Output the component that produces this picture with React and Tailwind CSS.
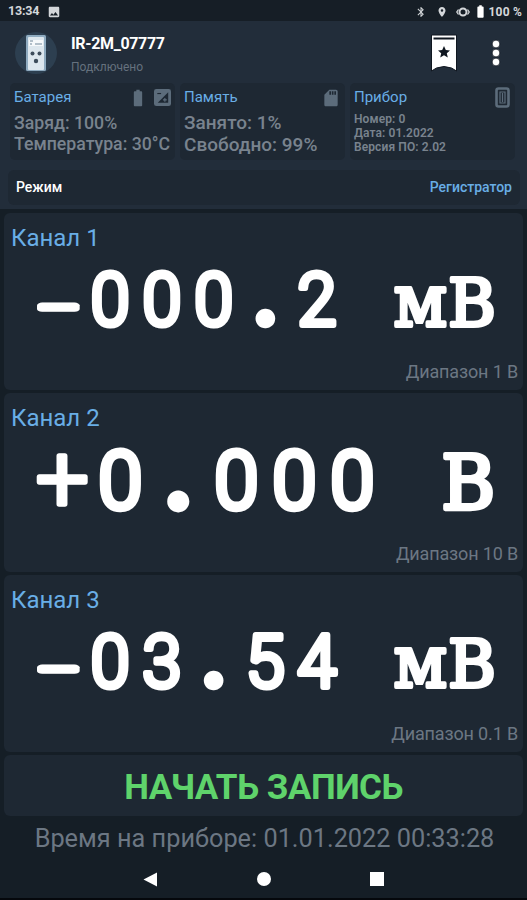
import { MdBluetooth, MdLocationOn, MdImage, MdBatteryFull, MdSdCard } from "react-icons/md";

// look of each symbol on the indicator, other symbols use the digit style
const digit = { font: "font-['Roboto'] font-light", size: 71.5, stroke: 6, sx: 0.98, dy: -0.5 };
const glyphs = {
  "-": { font: "font-['Roboto'] font-light", size: 72, stroke: 5.6, sx: 1.9, dy: 4.5 },
  "+": { font: "font-['Roboto'] font-light", size: 83, stroke: 4.8, sx: 1, dy: 2 },
  ".": { font: "font-['Lato'] font-bold", size: 60, stroke: 10.5, sx: 1, dy: -2.5 },
  "м": { font: "font-['DejaVu_Serif']", size: 72, stroke: 3.8, sx: 0.96, dy: 0.3 },
  "В": { font: "font-['DejaVu_Serif']", size: 66, stroke: 3.8, sx: 0.99, dy: 0.3 },
};

const channels = [
  { name: "Канал 1", value: "-000.2 мВ", range: "Диапазон 1 В", height: "h-[177px]", start: 54.5, pitch: 51.7, scale: 1, baseline: 65 },
  { name: "Канал 2", value: "+0.000 В", range: "Диапазон 10 В", height: "h-[179px]", start: 58.3, pitch: 58, scale: 1.125, baseline: 68.5 },
  { name: "Канал 3", value: "-03.54 мВ", range: "Диапазон 0.1 В", height: "h-[177px]", start: 54.5, pitch: 51.7, scale: 1, baseline: 64.5 },
];

function StatusBar() {
  return (
    <div className="flex h-[21px] shrink-0 items-center bg-[#161e26] pl-2 pr-[5px] pt-[2px] text-[#d4d7da]">
      <span className="text-[12.5px] font-bold tracking-[-0.2px]">13:34</span>
      <MdImage className="ml-[8px] size-[14px]" />
      <div className="ml-auto flex items-center">
        <MdBluetooth className="size-[12px]" />
        <MdLocationOn className="ml-[9px] size-[12px]" />
        <svg className="ml-[8px] h-[12px] w-[14px]" viewBox="0 0 14 12" fill="none" stroke="currentColor">
          <circle cx="7" cy="6" r="3.500" strokeWidth="2" />
          <path d="M2.500 3.500L0.800 6l1.700 2.500M11.500 3.500L13.200 6l-1.700 2.500" strokeWidth="1.300" />
        </svg>
        <MdBatteryFull className="ml-[3px] size-[15px] text-white" />
        <span className="text-[12px] font-bold tracking-[0.2px]">100 %</span>
      </div>
    </div>
  );
}

function DeviceIcon() {
  return (
    <svg className="size-[42px]" viewBox="0 0 42 42">
      <circle cx="21" cy="21" r="21" fill="#2d3f50" />
      <rect x="11" y="3" width="20" height="36" rx="1.5" fill="#8fabc0" />
      <rect x="13" y="5" width="16" height="33" rx="1" fill="#dde7ee" />
      <rect x="14" y="8" width="14" height="6" fill="#f6f9fb" />
      <path d="M15 9h3M15 12h2M20 12h7" stroke="#71879a" strokeWidth="1" />
      <g fill="#3d4c5b">
        <circle cx="17.500" cy="21.500" r="2" />
        <circle cx="24.500" cy="21.500" r="2" />
        <circle cx="21" cy="29" r="2.200" />
      </g>
    </svg>
  );
}

function Toolbar() {
  return (
    <div className="flex h-[62px] items-start pl-[15px]">
      <div className="pt-[11px]"><DeviceIcon /></div>
      <div className="pl-[14px] pt-[13px]">
        <p className="text-[16px] font-bold leading-[20px] tracking-[-0.35px] text-white">IR-2M_07777</p>
        <p className="pt-[4px] text-[12px] leading-[18px] text-[#65717e]">Подключено</p>
      </div>
      <svg className="ml-auto mr-[34px] mt-[13px] h-[38px] w-[26px]" viewBox="0 0 26 38">
        <path d="M0.500 1h25v36l-5-3q-7.500-3-15 0l-5 3z" fill="#fff" stroke="#101720" strokeWidth="1" />
        <path d="M2.500 4.500h21" stroke="#101720" strokeWidth="2" />
        <path d="M13 12l1.800 4 4.200.4-3.200 2.800 1 4.200-3.800-2.200-3.800 2.200 1-4.200L7 16.400l4.200-.4z" fill="#101720" />
      </svg>
      <svg className="mr-[26px] mt-[18px] h-[28px] w-[10px]" viewBox="0 0 10 28" fill="#fff" stroke="#101720" strokeWidth="0.800">
        <circle cx="5" cy="5" r="3.900" />
        <circle cx="5" cy="14" r="3.900" />
        <circle cx="5" cy="23" r="3.900" />
      </svg>
    </div>
  );
}

function InfoCard({ title, icons, lines, text }) {
  return (
    <div className="h-[77px] flex-1 rounded-[5px] bg-[#1e2833] px-[4px]">
      <div className="flex h-[29px] items-center justify-between">
        <p className="text-[15px] text-[#69aee6]">{title}</p>
        <div className="flex items-center gap-[6px] text-[#5c6c7b]">{icons}</div>
      </div>
      <div className={`whitespace-nowrap text-[#79838e] ${text}`}>
        {lines.map((line) => <p key={line}>{line}</p>)}
      </div>
    </div>
  );
}

function ContrastIcon() {
  return (
    <svg className="size-[17px]" viewBox="0 0 18 18">
      <rect width="18" height="18" rx="2.500" fill="currentColor" />
      <path d="M4 14.500L15 3.500v11z" fill="#1e2833" />
      <path d="M3.500 4.800h4" stroke="#1e2833" strokeWidth="1.200" />
      <path d="M9.500 11.500h4M11.500 9.500v4" stroke="currentColor" strokeWidth="1.200" />
    </svg>
  );
}

function PhoneIcon() {
  return (
    <svg className="mr-[1px] h-[21px] w-[15px]" viewBox="0 0 15 21" fill="none" stroke="currentColor">
      <rect x="1.500" y="1.500" width="12" height="18" rx="2" strokeWidth="2.600" />
      <path d="M5 5h5v11h-5zM7.500 6v9" strokeWidth="1.200" />
    </svg>
  );
}

function Readout({ value, start, pitch, scale, baseline }) {
  return (
    <svg className="mt-[11px] h-[90px] w-full overflow-visible" viewBox="0 0 519 90" fill="#fff" stroke="#fff" strokeLinejoin="round" textAnchor="middle">
      {value.split("").map((char, i) => {
        const g = glyphs[char] || digit;
        return (
          <text
            key={i}
            className={g.font}
            fontSize={g.size}
            strokeWidth={g.stroke}
            transform={`translate(${start + i * pitch} ${baseline + (g.dy - 2.4) * scale}) scale(${g.sx * scale} ${scale})`}
          >
            {char}
          </text>
        );
      })}
    </svg>
  );
}

function Channel({ name, range, height, ...readout }) {
  return (
    <div className={`flex flex-col rounded-[6px] bg-[#1e2833] ${height}`}>
      <p className="pl-[7px] pt-[11px] text-[24px] leading-[28px] text-[#69aee6]">{name}</p>
      <Readout {...readout} />
      <p className="mt-auto pb-[7px] pr-[5px] text-right text-[18px] leading-[22px] tracking-[-0.15px] text-[#6c7783]">{range}</p>
    </div>
  );
}

export default function App() {
  return (
    <div className="flex h-[900px] w-[527px] flex-col overflow-hidden border-b-2 border-[#05080c] bg-[#151e26] font-['Roboto',sans-serif]">
      <StatusBar />
      <header className="h-[188px] shrink-0 bg-[#222d3a]">
        <Toolbar />
        <div className="flex gap-[5px] pl-[10px] pr-[12px]">
          <InfoCard
            title="Батарея"
            lines={["Заряд: 100%", "Температура: 30°C"]}
            text="pt-[1px] text-[17.7px] font-medium leading-[21px]"
            icons={<><MdBatteryFull className="size-[20px]" /><ContrastIcon /></>}
          />
          <InfoCard
            title="Память"
            lines={["Занято: 1%", "Свободно: 99%"]}
            text="text-[19px] font-medium leading-[22px]"
            icons={<MdSdCard className="size-[20px]" />}
          />
          <InfoCard
            title="Прибор"
            lines={["Номер: 0", "Дата: 01.2022", "Версия ПО: 2.02"]}
            text="text-[12px] font-semibold leading-[14px] tracking-[0.1px]"
            icons={<PhoneIcon />}
          />
        </div>
        <div className="ml-[8px] mr-[7px] mt-[10px] flex h-[35px] items-center justify-between rounded-[6px] bg-[#1e2833] px-[8px] text-[14px]">
          <span className="font-medium text-white">Режим</span>
          <span className="font-medium text-[#69aee6]">Регистратор</span>
        </div>
      </header>
      <main className="flex flex-col gap-[3px] px-[4px] pt-[4px]">
        {channels.map((channel) => <Channel key={channel.name} {...channel} />)}
        <button className="h-[61px] rounded-[6px] bg-[#1e2833] pt-[6px] text-[35px] font-bold tracking-[-0.5px] text-[#5fd36b]">НАЧАТЬ ЗАПИСЬ</button>
      </main>
      <p className="pl-[2px] pt-[7px] text-center text-[25.3px] leading-[32px] text-[#6c7783]">Время на приборе: 01.01.2022 00:33:28</p>
      <nav className="flex h-[43px] items-center pt-[5px]">
        <svg className="ml-[143px] size-[15px]" viewBox="0 0 15 15" fill="#fff"><path d="M0.500 7.500L14 0.500v14z" /></svg>
        <span className="ml-[99px] size-[14px] rounded-full bg-white" />
        <span className="ml-[99px] size-[14px] bg-white" />
      </nav>
    </div>
  );
}
